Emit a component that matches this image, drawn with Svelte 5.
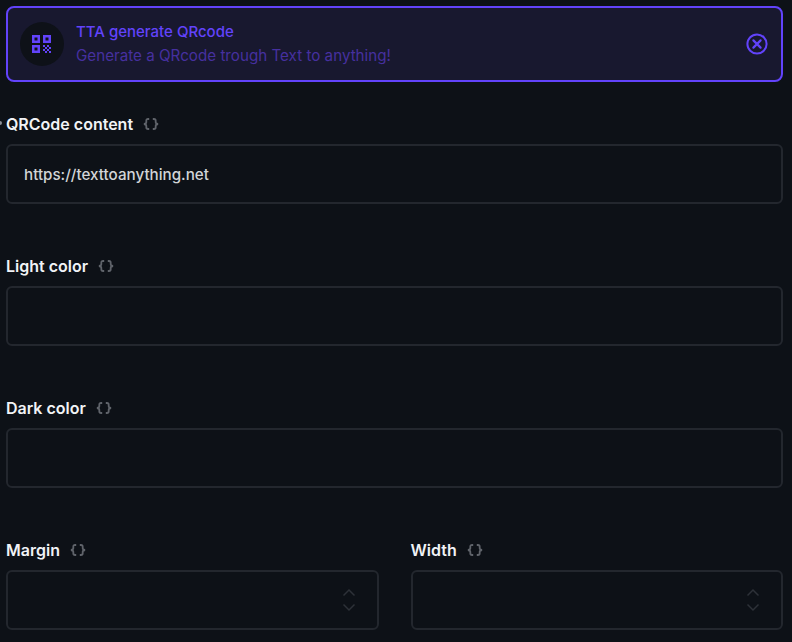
<script>
  const fields = [
    { label: 'Light color', value: '' },
    { label: 'Dark color', value: '' }
  ];
  const numbers = ['Margin', 'Width'];
</script>

{#snippet varIcon()}
  <svg class="var-icon" viewBox="0 0 16 12" width="16" height="12" fill="none" stroke="currentColor" stroke-width="1.8" aria-hidden="true">
    <path d="M6.2 1H5C3.9 1 3.3 1.6 3.3 2.7V4.2C3.3 5.1 2.5 5.7 1 6C2.5 6.3 3.3 6.9 3.3 7.8V9.3C3.3 10.4 3.9 11 5 11H6.2" />
    <path d="M9.8 1H11C12.1 1 12.7 1.6 12.7 2.7V4.2C12.7 5.1 13.5 5.7 15 6C13.5 6.3 12.7 6.9 12.7 7.8V9.3C12.7 10.4 12.1 11 11 11H9.8" />
  </svg>
{/snippet}

<div class="page">
  <span class="handle"></span>

  <div class="alert">
    <div class="badge">
      <svg viewBox="0 0 19 18" width="19" height="18" aria-hidden="true">
        <path fill="currentColor" fill-rule="evenodd" d="M0 0H8V8H0ZM2.5 2.5V5.5H5.5V2.5ZM11 0H19V8H11ZM13.5 2.5V5.5H16.5V2.5ZM0 10H8V18H0ZM2.5 12.5V15.5H5.5V12.5Z" />
        <path fill="currentColor" d="M11 10H13V12H11ZM15 10H17V12H15ZM13 12H15V14H13ZM17 12H19V14H17ZM11 14H13V16H11ZM15 14H17V16H15ZM13 16H15V18H13ZM17 16H19V18H17Z" />
      </svg>
    </div>
    <div class="alert-text">
      <div class="alert-title">TTA generate QRcode</div>
      <div class="alert-desc">Generate a QRcode trough Text to anything!</div>
    </div>
    <svg class="close" viewBox="0 0 22 22" width="22" height="22" fill="none" stroke="currentColor" aria-hidden="true">
      <circle cx="11" cy="11" r="9.6" stroke-width="2" />
      <path d="M7.4 7.4L14.6 14.6M14.6 7.4L7.4 14.6" stroke-width="2.2" stroke-linecap="round" />
    </svg>
  </div>

  <div class="field first">
    <div class="label">{'QRCode content'}{@render varIcon()}</div>
    <div class="input">https://texttoanything.net</div>
  </div>

  {#each fields as f}
    <div class="field">
      <div class="label">{f.label}{@render varIcon()}</div>
      <div class="input">{f.value}</div>
    </div>
  {/each}

  <div class="row">
    {#each numbers as n}
      <div class="field">
        <div class="label">{n}{@render varIcon()}</div>
        <div class="input number">
          <svg class="stepper" viewBox="0 0 14 24" width="14" height="24" fill="none" stroke="currentColor" stroke-width="1.5" aria-hidden="true">
            <path d="M1.5 7.5L7 2L12.5 7.5" />
            <path d="M1.5 16.5L7 22L12.5 16.5" />
          </svg>
        </div>
      </div>
    {/each}
  </div>
</div>

<style>
  :global(body) {
    margin: 0;
    background: #0d1117;
  }

  .page {
    position: relative;
    height: 642px;
    overflow: hidden;
    box-sizing: border-box;
    padding: 6px 9px 0 6px;
    font-family: Inter, "Liberation Sans", sans-serif;
    color: #f1f3f6;
  }

  .handle {
    position: absolute;
    left: -2px;
    top: 121px;
    width: 4px;
    height: 4px;
    border-radius: 50%;
    background: #8a8f98;
  }

  .alert {
    display: flex;
    align-items: center;
    box-sizing: border-box;
    height: 76px;
    padding: 0 13px 0 12px;
    border: 2px solid #6243fb;
    border-radius: 8px;
    background: #18182f;
    color: #6243fb;
  }

  .badge {
    display: flex;
    align-items: center;
    justify-content: flex-start;
    flex: none;
    box-sizing: border-box;
    width: 44px;
    height: 44px;
    padding-left: 12px;
    margin-right: 12px;
    border-radius: 50%;
    background: #0e1118;
  }

  .alert-text {
    flex: 1;
  }

  .alert-title {
    font-size: 15px;
    line-height: 20px;
    font-weight: 500;
    margin-bottom: 4px;
  }

  .alert-desc {
    font-size: 15.2px;
    line-height: 20px;
    color: #46309f;
  }

  .close {
    flex: none;
  }

  .field {
    margin-top: 32px;
  }

  .label {
    display: flex;
    align-items: center;
    gap: 10px;
    height: 20px;
    margin-bottom: 10px;
    font-size: 16px;
    line-height: 20px;
    font-weight: 600;
    white-space: pre;
  }

  .var-icon {
    color: #5f636a;
  }

  .input {
    position: relative;
    box-sizing: border-box;
    height: 60px;
    padding: 0 16px;
    display: flex;
    align-items: center;
    border: 2px solid #23272e;
    border-radius: 6px;
    font-size: 15.2px;
    color: #d3d5d8;
    font-weight: 500;
  }

  .field + .field,
  .first + .field {
    margin-top: 52px;
  }

  .row {
    display: grid;
    grid-template-columns: 1fr 1fr;
    gap: 32px;
    margin-top: 52px;
  }

  .row .field {
    margin-top: 0;
  }

  .number {
    justify-content: flex-end;
    padding-right: 21px;
  }

  .stepper {
    color: #2d3138;
  }
</style>
